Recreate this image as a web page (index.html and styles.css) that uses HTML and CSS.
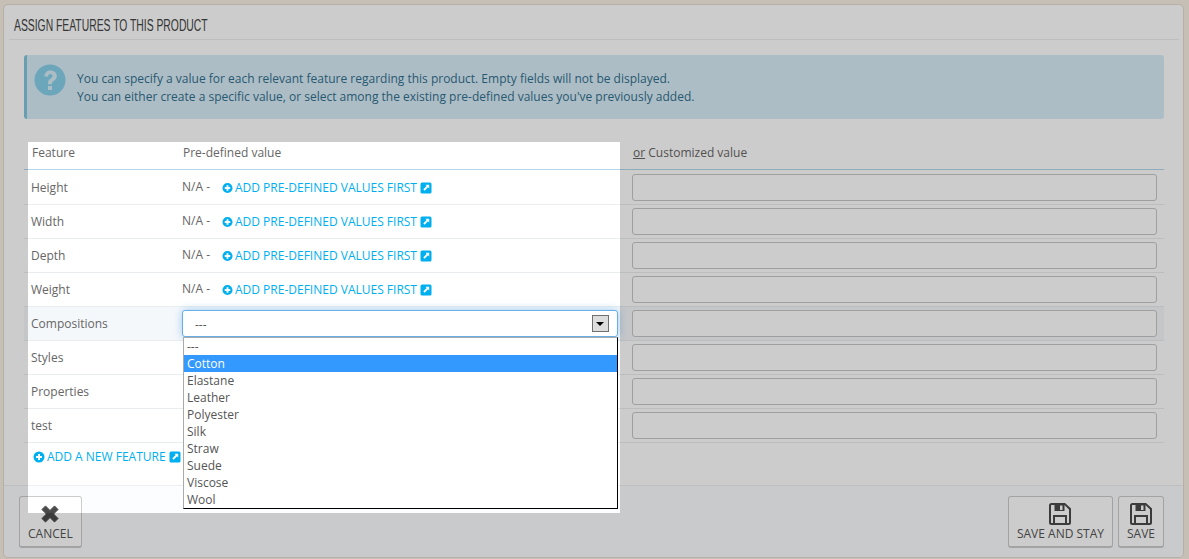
FILE: index.html
```html
<!DOCTYPE html>
<html lang="en">
<head>
<meta charset="utf-8">
<title>Assign features to this product</title>
<link rel="stylesheet" href="styles.css">
</head>
<body>
<svg class="defs" width="0" height="0" aria-hidden="true">
  <symbol id="plus" viewBox="0 0 12 12"><path fill="currentColor" fill-rule="evenodd" d="M6 .5a5.5 5.5 0 1 1 0 11 5.500 5.500 0 0 1 0-11zM5 3v2H3v2h2v2h2V7h2V5H7V3z"/></symbol>
  <symbol id="ext" viewBox="0 0 12 12"><path fill="currentColor" fill-rule="evenodd" d="M2 .5h8A1.500 1.500 0 0 1 11.500 2v8a1.500 1.500 0 0 1-1.500 1.500H2A1.500 1.500 0 0 1 .5 10V2A1.500 1.500 0 0 1 2 .5zM5.500 2.800l1.200 1.200-3.400 3.300 1.400 1.400L8 5.300l1.200 1.200V2.800z"/></symbol>
  <symbol id="floppy" viewBox="0 0 22 22"><path fill="currentColor" fill-rule="evenodd" d="M2.500 0H16l6 5.500V19.500a2.500 2.500 0 0 1-2.500 2.500h-17A2.500 2.500 0 0 1 0 19.500v-17A2.500 2.500 0 0 1 2.500 0zM5.500 2H2.500a.5.5 0 0 0-.5.5v17a.5.5 0 0 0 .5.5H4v-8h14v8h1.500a.5.5 0 0 0 .5-.5V6.500L15.500 2v6h-10zM6 14v6h10v-6zM11 2.500V7h2.500V2.500z"/></symbol>
</svg>

<main class="panel">
  <h3 class="panel-title"><span class="panel-title-text">Assign features to this product</span></h3>

  <div class="alert">
    <svg class="alert-icon" viewBox="0 0 32 32" aria-hidden="true"><circle cx="16" cy="16" r="15.500" fill="currentColor"/><path fill="#d9edf7" d="M10.300 12.200C10.800 8.500 13.300 6.500 16.500 6.500c3.500 0 6.300 2.300 6.300 5.400 0 4.600-4.800 4.700-4.800 7.600v.7h-4v-1.200c0-4.200 4.500-4.500 4.500-7 0-1.200-.9-2-2.200-2-1.300 0-2.100.8-2.400 2.800zM14 22h4v4h-4z"/></svg>
    <p class="alert-text">You can specify a value for each relevant feature regarding this product. Empty fields will not be displayed.<br>You can either create a specific value, or select among the existing pre-defined values you've previously added.</p>
  </div>

  <table class="features">
    <thead>
      <tr>
        <th class="c-name">Feature</th>
        <th class="c-pre">Pre-defined value</th>
        <th class="c-custom"><u>or</u> Customized value</th>
      </tr>
    </thead>
    <tbody>
      <tr><td>Height</td><td><span class="na">N/A -</span><a class="link"><svg class="ic"><use href="#plus"/></svg>Add pre-defined values first<svg class="ic ext"><use href="#ext"/></svg></a></td><td><span class="input"></span></td></tr>
      <tr><td>Width</td><td><span class="na">N/A -</span><a class="link"><svg class="ic"><use href="#plus"/></svg>Add pre-defined values first<svg class="ic ext"><use href="#ext"/></svg></a></td><td><span class="input"></span></td></tr>
      <tr><td>Depth</td><td><span class="na">N/A -</span><a class="link"><svg class="ic"><use href="#plus"/></svg>Add pre-defined values first<svg class="ic ext"><use href="#ext"/></svg></a></td><td><span class="input"></span></td></tr>
      <tr><td>Weight</td><td><span class="na">N/A -</span><a class="link"><svg class="ic"><use href="#plus"/></svg>Add pre-defined values first<svg class="ic ext"><use href="#ext"/></svg></a></td><td><span class="input"></span></td></tr>
      <tr class="active">
        <td>Compositions</td>
        <td>
          <div class="select-wrap">
            <div class="select"><span class="select-value">---</span><span class="arrow"></span></div>
            <ul class="dropdown">
              <li>---</li>
              <li class="selected">Cotton</li>
              <li>Elastane</li>
              <li>Leather</li>
              <li>Polyester</li>
              <li>Silk</li>
              <li>Straw</li>
              <li>Suede</li>
              <li>Viscose</li>
              <li>Wool</li>
            </ul>
          </div>
        </td>
        <td><span class="input"></span></td>
      </tr>
      <tr><td>Styles</td><td></td><td><span class="input"></span></td></tr>
      <tr><td>Properties</td><td></td><td><span class="input"></span></td></tr>
      <tr><td>test</td><td></td><td><span class="input"></span></td></tr>
    </tbody>
  </table>

  <a class="link add-feature"><svg class="ic"><use href="#plus"/></svg>Add a new feature<svg class="ic ext"><use href="#ext"/></svg></a>

  <footer class="panel-footer">
    <button class="btn">
      <svg class="btn-icon cancel" viewBox="0 0 20 20" aria-hidden="true"><path fill="currentColor" d="M5 1 10 6 15 1 19 5 14 10 19 15 15 19 10 14 5 19 1 15 6 10 1 5z" stroke="currentColor" stroke-width="1" stroke-linejoin="round"/></svg>
      Cancel
    </button>
    <div class="footer-right">
      <button class="btn"><svg class="btn-icon"><use href="#floppy"/></svg>Save and stay</button>
      <button class="btn"><svg class="btn-icon"><use href="#floppy"/></svg>Save</button>
    </div>
  </footer>
</main>

<div class="spotlight" aria-hidden="true"></div>
</body>
</html>
```

FILE: styles.css
```css
* { box-sizing: border-box; }
html, body { height: 100%; }
body {
  margin: 0;
  padding: 4px 5px 1px 3px;
  background: #f8efe3;
  font-family: "Open Sans", "Liberation Sans", sans-serif;
  font-size: 12px;
  color: #666;
  overflow: hidden;
}
.defs { position: absolute; }

.panel {
  position: relative;
  height: 554px;
  padding: 0 19px 0 20px;
  background: #fff;
  border: 1px solid #e6ddd0;
  border-radius: 5px;
}
.panel-title {
  margin: 0 -15px 15px;
  padding: 0 0 0 5px;
  height: 35px;
  line-height: 42px;
  border-bottom: 1px solid #eee;
  font-size: 14px;
  font-weight: 400;
  white-space: nowrap;
}
.panel-title-text {
  display: inline-block;
  font-family: "Liberation Sans", sans-serif;
  font-size: 16px;
  text-transform: uppercase;
  color: #444;
  transform: scaleX(.647);
  transform-origin: left center;
}

.alert {
  display: flex;
  align-items: flex-start;
  height: 64px;
  padding: 9px 0 0 7px;
  background: #d9edf7;
  border-left: 3px solid #81c6dd;
  border-radius: 3px;
  color: #31708f;
}
.alert-icon { width: 32px; height: 32px; color: #86d0ea; flex: none; }
.alert-text { margin: 6px 0 0 11px; font-size: 12px; line-height: 18px; }

.features {
  width: 1140px;
  margin-top: 15px;
  border-collapse: collapse;
  table-layout: fixed;
}
.features th {
  height: 35px;
  padding: 2px 0 0 8px;
  text-align: left;
  font-weight: 400;
  font-size: 12px;
  color: #666;
  border-bottom: 1px solid #b4d6ea;
}
.features .c-name { width: 151px; }
.features .c-pre { width: 449px; }
.features .c-custom { padding-left: 9px; }
.features td {
  height: 34px;
  padding: 0 0 0 7px;
  border-bottom: 1px solid #eaedef;
  font-size: 12px;
  color: #666;
  vertical-align: middle;
}
.features tbody tr:first-child td { height: 35px; padding-top: 1px; }
.features td:nth-child(2) { padding-left: 8px; white-space: nowrap; }
.features td:nth-child(3) { padding-left: 8px; }
.features .active td { background: #f5f8fb; }

.na { display: inline-block; width: 40px; margin-left: -1px; position: relative; top: -1px; }
.link {
  color: #00aff0;
  font-size: 12px;
  text-transform: uppercase;
  white-space: nowrap;
}
.ic { width: 12px; height: 12px; margin-right: 2px; vertical-align: -2px; }
.ic.ext { margin: 0 0 0 3px; }
.features .link .ic:first-child { width: 11px; margin-right: 2px; }

.input {
  display: block;
  width: 525px;
  height: 27px;
  background: #fff;
  border: 1px solid #c7c7c7;
  border-radius: 3px;
}

.select-wrap { position: relative; width: 436px; margin-left: -1px; }
.select {
  display: flex;
  align-items: center;
  justify-content: space-between;
  height: 27px;
  padding: 0 8px 0 12px;
  background: #fff;
  border: 1px solid #66afe9;
  border-radius: 3px;
  box-shadow: 0 0 8px rgba(102, 175, 233, .6);
  color: #555;
}
.select-value { padding-top: 2px; }
.arrow {
  position: relative;
  width: 17px;
  height: 17px;
  border: 1px solid #707070;
  background: #ddd;
}
.arrow::after {
  content: "";
  position: absolute;
  left: 3px;
  top: 6px;
  border: 4px solid transparent;
  border-top: 4px solid #000;
  border-bottom: 0;
}
.dropdown {
  position: absolute;
  z-index: 2;
  top: 27px;
  left: 1px;
  width: 435px;
  height: 172px;
  margin: 0;
  padding: 0;
  list-style: none;
  background: #fff;
  border: 1px solid #000;
  border-color: #aaa #000 #000 #aaa;
}
.dropdown li {
  height: 17px;
  padding-left: 3px;
  line-height: 17px;
  font-size: 12px;
  color: #555;
}
.dropdown .selected { background: #39f; color: #fff; }

.add-feature { display: block; margin: 6px 0 0 9px; line-height: 16px; }

.panel-footer {
  position: absolute;
  left: 0;
  right: 0;
  bottom: 0;
  height: 72px;
  display: flex;
  justify-content: space-between;
  align-items: flex-start;
  padding: 10px 19px 0 15px;
  background: #fcfdfe;
  border-top: 1px solid #eee;
  border-radius: 0 0 5px 5px;
}
.footer-right { display: flex; gap: 5px; }
.btn {
  display: flex;
  flex-direction: column;
  align-items: center;
  height: 52px;
  padding: 6px 8px 0;
  background: #fff;
  border: 1px solid #ccc;
  border-bottom-width: 2px;
  border-radius: 3px;
  font-family: inherit;
  font-size: 12px;
  line-height: 16px;
  color: #555;
  text-transform: uppercase;
  white-space: nowrap;
}
.btn-icon { width: 22px; height: 22px; margin-bottom: 1px; color: #4a4a4a; }
.btn-icon.cancel { width: 18px; height: 18px; margin: 2px 0 3px; }

.spotlight {
  position: absolute;
  left: 28px;
  top: 142px;
  width: 592px;
  height: 371px;
  box-shadow: 0 0 0 1300px rgba(0, 0, 0, .2);
  pointer-events: none;
}
```
